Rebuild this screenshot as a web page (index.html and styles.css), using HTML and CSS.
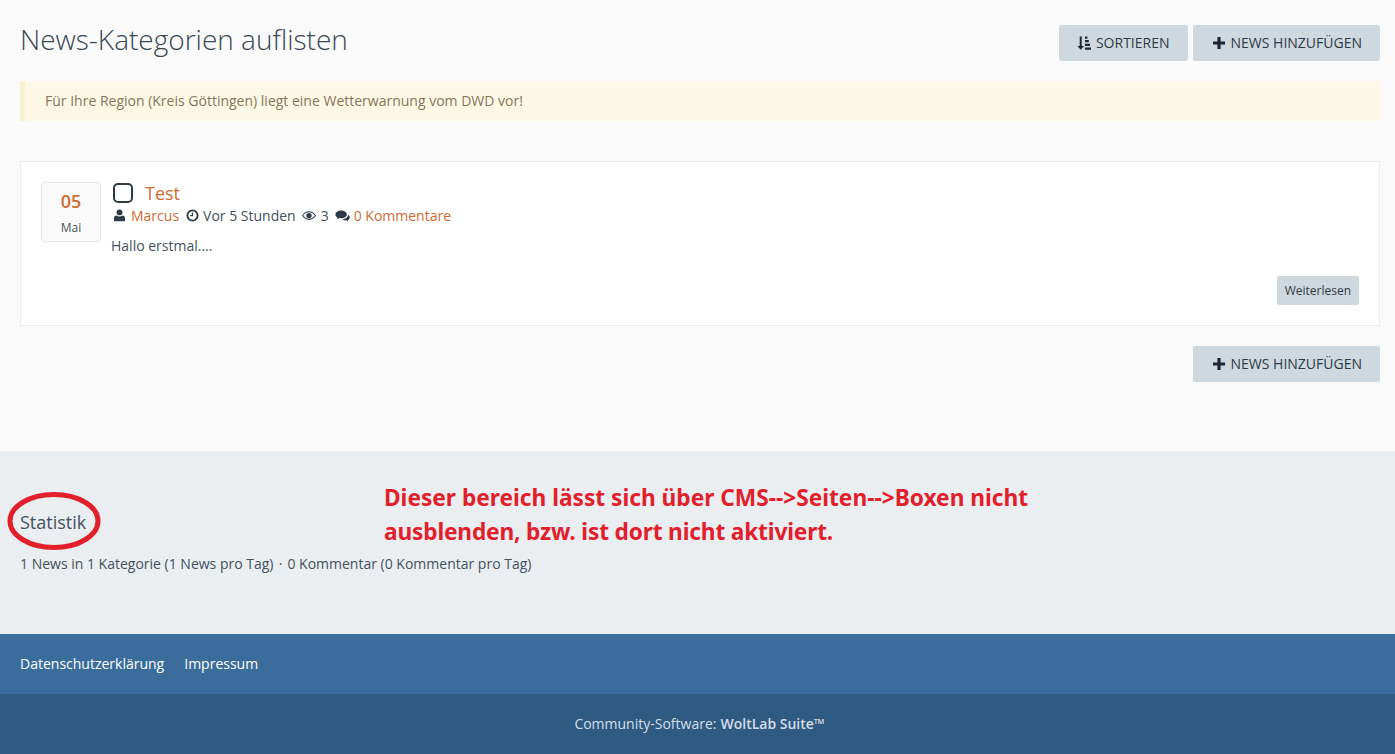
FILE: index.html
```html
<!DOCTYPE html>
<html lang="de">
<head>
<meta charset="utf-8">
<title>News-Kategorien auflisten</title>
<link rel="stylesheet" href="styles.css">
</head>
<body>
<main class="main">
  <header class="head">
    <h1 class="title">News-Kategorien auflisten</h1>
    <div class="actions">
      <a class="btn"><svg class="ico-sort" viewBox="0 0 14 14" width="14" height="14"><path d="M2.700 .5h2v9.500h2.300L3.700 13.800 .4 10h2.300z"/><path d="M8 .5h2.400v2.200H8zM8 4.100h3.800v2.200H8zM8 7.700h5v2.200H8zM8 11.500h6v2.200H8z"/></svg><span class="btn-label">SORTIEREN</span></a>
      <a class="btn btn-add"><svg class="ico-plus" viewBox="0 0 12 12" width="12" height="12"><path d="M4.4 0h3.2v4.4H12v3.2H7.6V12H4.4V7.6H0V4.4h4.4z"/></svg><span class="btn-label">NEWS HINZUFÜGEN</span></a>
    </div>
  </header>
  <div class="alert">Für Ihre Region (Kreis Göttingen) liegt eine Wetterwarnung vom DWD vor!</div>
  <article class="card">
    <div class="item">
      <div class="date"><span class="day">05</span><span class="month">Mai</span></div>
      <div class="body">
        <h2 class="news-title"><span class="check"></span><a class="link">Test</a></h2>
        <div class="meta">
          <span class="meta-item meta-author"><svg class="mi" viewBox="0 0 12 14" width="11" height="13"><circle cx="6" cy="3.6" r="3.2"/><path d="M0 13.2V10c0-2 1.300-3 2.700-3 1 .8 2.100 1.200 3.300 1.200S8.300 7.800 9.300 7c1.400 0 2.700 1 2.700 3v3.200z"/></svg><a class="link">Marcus</a></span>
          <span class="meta-item meta-time"><svg class="mi" viewBox="0 0 14 14" width="13" height="13"><path fill-rule="evenodd" d="M7 .5a6.500 6.500 0 1 0 0 13 6.500 6.500 0 0 0 0-13zm0 2a4.500 4.500 0 1 1 0 9 4.500 4.500 0 0 1 0-9z"/><path d="M6.300 3.800h1.300v3.900H4.500V6.500h1.800z"/></svg>Vor 5 Stunden</span>
          <span class="meta-item"><svg class="mi" viewBox="0 0 16 12" width="14" height="11"><path fill-rule="evenodd" d="M8 1C4.500 1 1.700 3.200 0 6c1.700 2.800 4.500 5 8 5s6.300-2.200 8-5c-1.700-2.800-4.500-5-8-5zm0 1.200c3 0 5.200 1.700 6.600 3.800C13.200 8.100 11 9.800 8 9.800S2.800 8.100 1.400 6C2.800 3.900 5 2.200 8 2.200z"/><circle cx="8" cy="6" r="3"/></svg>3</span>
          <span class="meta-item meta-comments"><svg class="mi" viewBox="0 0 16 13" width="15" height="12"><path d="M6.500 .5C3 .5.300 2.400.300 4.800c0 1.400.9 2.600 2.300 3.400-.2.700-.6 1.300-1.100 1.800 1.100-.1 2.200-.6 3-1.300.6.100 1.300.2 2 .2 3.500 0 6.200-1.900 6.200-4.100S10 .5 6.500.5z"/><path d="M14 5.200c0 2.800-2.900 4.700-6.600 4.900 1 .8 2.300 1.200 3.700 1.200.5 0 .9 0 1.300-.1.700.6 1.500 1 2.400 1.100-.4-.4-.7-.9-.9-1.500 1.200-.7 2-1.700 2-2.900 0-1-.7-2-1.900-2.700z"/></svg><a class="link">0 Kommentare</a></span>
        </div>
        <p class="text">Hallo erstmal....</p>
      </div>
    </div>
    <div class="more"><a class="btn-small">Weiterlesen</a></div>
  </article>
  <div class="bottom-actions">
    <a class="btn btn-add"><svg class="ico-plus" viewBox="0 0 12 12" width="12" height="12"><path d="M4.4 0h3.2v4.4H12v3.2H7.6V12H4.4V7.6H0V4.4h4.4z"/></svg><span class="btn-label">NEWS HINZUFÜGEN</span></a>
  </div>
</main>
<section class="stats">
  <h3 class="stats-title">Statistik</h3>
  <p class="stats-text">1 News in 1 Kategorie (1 News pro Tag) <span class="dot">·</span> 0 Kommentar (0 Kommentar pro Tag)</p>
  <svg class="circle" viewBox="0 0 96 62" width="96" height="62"><ellipse cx="47" cy="30" rx="44" ry="26.500"/></svg>
  <p class="note">Dieser bereich lässt sich über CMS--&gt;Seiten--&gt;Boxen nicht<br><span class="note-second">ausblenden, bzw. ist dort nicht aktiviert.</span></p>
</section>
<nav class="foot-nav"><a>Datenschutzerklärung</a><a>Impressum</a></nav>
<footer class="copy"><span>Community-Software:</span><b>WoltLab Suite™</b></footer>
</body>
</html>
```
FILE: styles.css
```css
* { box-sizing: border-box; }
html, body { margin: 0; padding: 0; }
body {
  background: #fafafa;
  font-family: "Open Sans", "Liberation Sans", sans-serif;
  font-size: 14px;
  line-height: 21px;
  color: #44515e;
}
.main { padding: 20px 15px 0 20px; height: 451px; }
.head { display: flex; justify-content: space-between; align-items: flex-start; height: 61px; }
.title { margin: -1px 0 0; font-size: 28px; font-weight: 300; line-height: 40px; color: #3a4756; }
.actions { display: flex; gap: 5px; padding-top: 5px; }
.bottom-actions { display: flex; justify-content: flex-end; margin-top: 20px; }
.btn {
  display: flex; align-items: center; height: 36px; padding: 0 18px;
  background: #cfd8de; border-radius: 2px; color: #2e3a47; font-size: 14px;
}
.btn-add { padding-left: 20px; }
.btn-label { margin-top: -2px; }
.ico-sort, .ico-plus { fill: #1d2732; margin-right: 5px; }
.ico-plus { margin-right: 6px; }
.alert {
  height: 40px; padding: 9px 20px; background: #fdf8e6; border-left: 5px solid #faf1d4;
  color: #86775a; font-size: 14px;
}
.card {
  margin-top: 40px; height: 165px; padding: 20px; background: #fff; border: 1px solid #ebedee;
  display: flex; flex-direction: column; justify-content: space-between;
}
.item { display: flex; gap: 10px; }
.date {
  width: 60px; height: 60px; display: flex; flex-direction: column; align-items: center;
  background: #fafafa; border: 1px solid #e4e6e8; border-radius: 3px; padding-top: 6px;
}
.day { color: #cf6a35; font-size: 18px; font-weight: 600; line-height: 24px; }
.month { font-size: 12px; line-height: 18px; margin-top: 6px; color: #4a5663; }
.body { flex: 1; }
.news-title { margin: 0; font-size: 18px; font-weight: 400; line-height: 22px; display: flex; align-items: center; }
.check { width: 20px; height: 20px; border: 2px solid #2e3a47; border-radius: 5px; margin: 0 12px 0 2px; }
.link { color: #cf6a35; }
.meta { display: flex; gap: 6px; margin-top: 1px; padding-left: 3px; line-height: 21px; }
.meta-item { display: flex; align-items: center; }
.meta-author { margin-right: 1px; }
.mi { fill: #2e3a47; margin-right: 5px; }
.meta-author .mi { margin-right: 6px; }
.meta-time .mi, .meta-comments .mi { margin-right: 4px; }
.text { margin: 9px 0 0; }
.more { display: flex; justify-content: flex-end; }
.btn-small {
  display: block; height: 29px; padding: 0 8px; background: #cfd8de; border-radius: 2px;
  font-size: 12px; line-height: 29px; color: #2e3a47;
}
.stats { position: relative; height: 183px; background: #ebeef1; padding: 59px 20px 0; }
.stats-title { margin: 0; font-size: 18px; font-weight: 400; line-height: 24px; color: #44515e; }
.stats-text { margin: 19px 0 0; }
.dot { margin: 0 1.500px; }
.circle { position: absolute; left: 7px; top: 40px; fill: none; stroke: #e2202c; stroke-width: 5; }
.note {
  position: absolute; left: 384px; top: 30px; margin: 0; color: #e2202c;
  font-size: 22.700px; font-weight: 700; line-height: 34px; font-family: "Noto Sans", sans-serif;
}
.note-second { letter-spacing: -0.170px; }
.foot-nav { height: 60px; background: #3a6d9c; display: flex; align-items: center; gap: 20px; padding: 0 20px 2px; color: #fff; }
.copy { height: 60px; background: #2f5a82; display: flex; align-items: center; justify-content: center; gap: 4px; padding: 0 0 2px 4px; color: #d5dfe8; }
.copy b { font-weight: 600; }
```
